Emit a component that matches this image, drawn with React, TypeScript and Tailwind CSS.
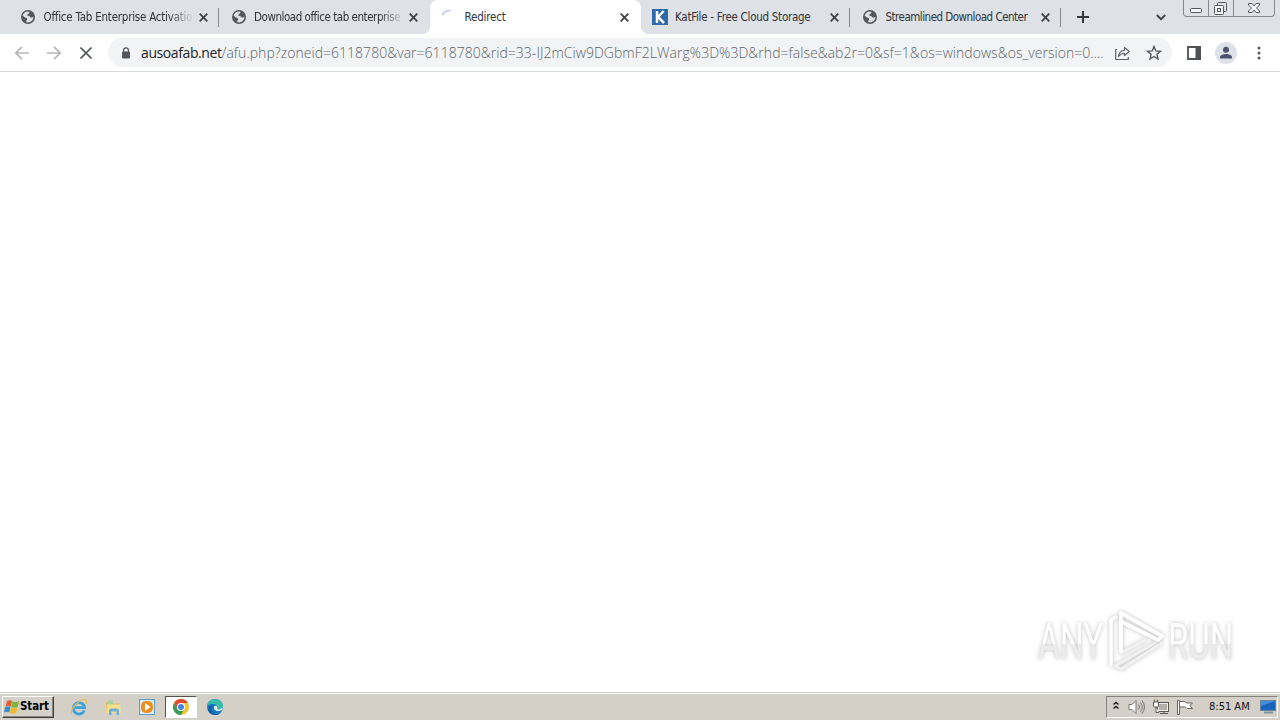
import type { ReactNode } from 'react';
import clsx from 'clsx';

type TabIcon = 'globe' | 'loading' | 'katfile';

interface BrowserTab {
  title: string;
  icon: TabIcon;
  active?: boolean;
  faded?: boolean;
  separator?: boolean;
  spacing: string;
}

const TABS: BrowserTab[] = [
  { title: 'Office Tab Enterprise Activatio', icon: 'globe', faded: true, separator: true, spacing: 'tracking-[-0.23px]' },
  { title: 'Download office tab enterprise', icon: 'globe', faded: true, spacing: 'tracking-[-0.46px]' },
  { title: 'Redirect', icon: 'loading', active: true, spacing: 'tracking-[-0.2px]' },
  { title: 'KatFile - Free Cloud Storage', icon: 'katfile', separator: true, spacing: 'tracking-[-0.27px]' },
  { title: 'Streamlined Download Center', icon: 'globe', separator: true, spacing: 'tracking-[-0.51px]' },
];

function GlobeIcon() {
  return (
    <svg width="14" height="14" viewBox="0 0 14 14">
      <circle cx="7" cy="7" r="7" fill="#54575c" />
      <path
        d="M1.600 5.500C2.500 3 4.500 1.700 7 1.600L8.500 2 8 3.500 6.500 4.300 6.300 5.500 8.500 6.200 9.500 7.600H11L12.400 6.800C12.500 9.500 10.500 12.300 7 12.400L5.500 12.200 5.200 10.500 6.300 9.500 5.600 8 3.500 7.200Z"
        fill="#dee1e6"
      />
    </svg>
  );
}

function TabFavicon({ icon }: { icon: TabIcon }) {
  if (icon === 'loading') {
    return (
      <svg width="16" height="16" viewBox="0 0 16 16" fill="none">
        <path d="M1.6 6.2C2.4 3.700 4.500 1.500 9.500 1.500" stroke="#b9c6ef" strokeWidth="1.500" />
      </svg>
    );
  }
  if (icon === 'katfile') {
    return (
      <svg width="16" height="16" viewBox="0 0 16 16">
        <rect width="16" height="16" fill="#2f69a8" />
        <path d="M5 2v12M11.700 2 6 8l6 6" stroke="#fff" strokeWidth="2.500" fill="none" />
      </svg>
    );
  }
  return <GlobeIcon />;
}

function CloseIcon() {
  return (
    <svg width="9" height="9" viewBox="0 0 9 9" stroke="#3f4247" strokeWidth="1.800">
      <path d="m.700.700 7.600 7.600M8.300.700.700 8.300" />
    </svg>
  );
}

function Tab({ tab }: { tab: BrowserTab }) {
  return (
    <div className={clsx('relative h-[34px] w-[210.5px] shrink-0', tab.active && 'rounded-t-lg bg-white')}>
      {tab.active && (
        <>
          <span className="absolute bottom-0 -left-2 size-2 bg-[radial-gradient(circle_at_0_0,transparent_8px,white_8px)]" />
          <span className="absolute -right-2 bottom-0 size-2 bg-[radial-gradient(circle_at_100%_0,transparent_8px,white_8px)]" />
        </>
      )}
      <div className="flex h-full items-center pl-[11px]">
        <span className="flex w-4 shrink-0 justify-center"><TabFavicon icon={tab.icon} /></span>
        <span
          className={clsx(
            'ml-[7.5px] w-[150px] overflow-hidden text-[11.5px] leading-4 whitespace-nowrap text-[#303338]',
            tab.faded && '[mask-image:linear-gradient(to_right,black_125px,transparent_150px)]',
            tab.spacing,
          )}
        >
          {tab.title}
        </span>
        <span className="ml-[5.4px]"><CloseIcon /></span>
      </div>
      {tab.separator && <span className="absolute top-2 right-[0.6px] h-[19px] w-px bg-[#86898f]" />}
    </div>
  );
}

function WindowControls() {
  return (
    <div className="absolute top-0 right-[5px] flex h-[17px] w-[92px] rounded-b-[4px] border border-t-0 border-[#85888e]">
      <svg width="90" height="16" viewBox="0 0 90 16" fill="none" stroke="#54585f">
        <path d="M24.5 0v16M49.5 0v16" stroke="#85888e" />
        <rect x="6.5" y="8.5" width="11" height="4" rx="1" fill="#f6f6f6" />
        <path d="M33.5 5V3.500q0-1 1-1h7q1 0 1 1v7q0 1-1 1H40" />
        <rect x="30.5" y="5.5" width="9" height="9" rx="1" fill="#f6f6f6" />
        <rect x="33.5" y="8.5" width="3" height="3" />
        <path d="M64.5 3.500h3.500l2 2.400 2-2.400h3.500v1.500l-3 3 3 3v1.500H72l-2-2.400-2 2.400h-3.500V11l3-3-3-3Z" fill="#f6f6f6" />
      </svg>
    </div>
  );
}

function TabStrip() {
  return (
    <header className="relative flex h-[34px] bg-[#dee1e6] pl-[9px]">
      {TABS.map((tab) => <Tab key={tab.title} tab={tab} />)}
      <div className="flex flex-1 items-center pl-[15.5px]">
        <svg width="12" height="12" viewBox="0 0 12 12" stroke="#34373c" strokeWidth="2">
          <path d="M6 0v12M0 6h12" />
        </svg>
        <svg className="ml-[67px]" width="10" height="7" viewBox="0 0 10 7" fill="none" stroke="#3e4146" strokeWidth="1.9">
          <path d="m.8 1 4.200 4.200L9.200 1" />
        </svg>
      </div>
      <WindowControls />
    </header>
  );
}

function Arrow({ back }: { back?: boolean }) {
  return (
    <svg className={clsx(back && 'rotate-180')} width="14" height="14" viewBox="0 0 14 14" fill="none" stroke="#b4b6b9" strokeWidth="1.7">
      <path d="M0 7h13M7 .8 13.200 7 7 13.200" />
    </svg>
  );
}

function Toolbar() {
  return (
    <div className="flex h-[38px] items-center border-b border-[#d9dadc] bg-white pl-[15px]">
      <Arrow back />
      <span className="ml-[18px]"><Arrow /></span>
      <svg className="ml-[19px]" width="12" height="12" viewBox="0 0 12 12" stroke="#54575b" strokeWidth="1.6">
        <path d="m.5.5 11 11M11.500.5.5 11.500" />
      </svg>

      <div className="ml-4 flex h-[29px] w-[1064px] items-center rounded-full bg-[#f1f3f5] pl-[13px]">
        <svg width="10" height="12" viewBox="0 0 10 12">
          <path d="M2.600 5V3.200a2.400 2.400 0 0 1 4.800 0V5" fill="none" stroke="#54575c" strokeWidth="1.300" />
          <rect x="1" y="4.500" width="8" height="7" rx="1" fill="#54575c" />
        </svg>
        <span className="ml-[10px] w-[973px] font-['Open_Sans','Noto_Sans',sans-serif] text-[14px] leading-5 font-light tracking-[0.03px] whitespace-nowrap text-[#60646a]">
          <span className="font-normal tracking-[-0.4px] text-[#202327]">ausoafab.net</span>
          /afu.php?zoneid=6118780&amp;var=6118780&amp;rid=33-IJ2mCiw9DGbmF2LWarg%3D%3D&amp;rhd=false&amp;ab2r=0&amp;sf=1&amp;os=windows&amp;os_version=0....
        </span>
        <svg className="shrink-0" width="17" height="16" viewBox="0 0 17 16" fill="none" stroke="#5c6066" strokeWidth="1.150">
          <path d="M3 4.500H1.700v10h12.600V12M4.500 11.500C4.800 7.800 6.700 5.500 10.500 5.200V2.500L15.300 6.500l-4.800 4V8.200C7.800 8.200 6 9.500 4.500 11.500Z" strokeLinejoin="round" />
        </svg>
        <svg className="ml-[15px] shrink-0" width="16" height="16" viewBox="0 0 16 16" fill="none" stroke="#55595f" strokeWidth="1.400">
          <path d="m8 1.500 1.800 4.400 4.700.4-3.600 3 1.100 4.700L8 11.500l-4 2.500 1.100-4.700-3.600-3 4.700-.4Z" />
        </svg>
      </div>

      <svg className="ml-[15px]" width="14" height="14" viewBox="0 0 14 14">
        <path d="M1 1h12v12H1Z" fill="none" stroke="#4f5257" strokeWidth="1.800" />
        <path d="M8.500 0H14v14H8.500Z" fill="#4f5257" />
      </svg>
      <svg className="ml-[14px]" width="22" height="22" viewBox="0 0 22 22">
        <circle cx="11" cy="11" r="11" fill="#dee1e8" />
        <circle cx="11" cy="7.800" r="3" fill="#4d536e" />
        <path d="M5 16.500v-1.300C5 13 8.500 12 11 12s6 1 6 3.200v1.300Z" fill="#4d536e" />
      </svg>
      <svg className="ml-[19.5px]" width="4" height="14" viewBox="0 0 4 14" fill="#54575c">
        <circle cx="2" cy="2" r="1.500" />
        <circle cx="2" cy="7" r="1.500" />
        <circle cx="2" cy="12" r="1.500" />
      </svg>
    </div>
  );
}

function Watermark() {
  return (
    <div className="absolute right-[48px] bottom-[20px] drop-shadow-[0_0_2px_rgba(0,0,0,0.26)]">
      <div className="flex h-16 items-center font-['Roboto','Liberation_Sans',sans-serif] text-[50px] leading-[60px] font-normal text-transparent">
        <span className="flex w-[63px] shrink-0 pt-[3px]">
          <span className="origin-left scale-x-[0.67] bg-linear-to-b from-white from-53% to-[#ececec] to-53% bg-clip-text">ANY</span>
        </span>
        <svg className="ml-[7px] shrink-0" width="56" height="62" viewBox="0 0 56 62" fill="none" stroke="#fff" strokeLinejoin="round" strokeLinecap="round">
          <path d="M54 34 13 60 7 57 47 34" stroke="#f1f1f1" strokeWidth="3" />
          <path d="M13 44 37 31" stroke="#f1f1f1" strokeWidth="3" />
          <path d="M3 56V11l5-3" strokeWidth="3.500" />
          <path d="M13 42V4L54 27 50 31 14 13" strokeWidth="3.800" />
        </svg>
        <span className="ml-[4px] flex w-[64px] shrink-0 pt-[3px]">
          <span className="origin-left scale-x-[0.66] bg-linear-to-b from-white from-53% to-[#ececec] to-53% bg-clip-text">RUN</span>
        </span>
      </div>
    </div>
  );
}

function WindowsFlag() {
  return (
    <svg className="shrink-0" width="16" height="16" viewBox="0 0 16 16">
      <path d="M3 2Q5.500.5 8 2L6.700 7.500Q4 6 1.500 7.500Z" fill="#e65b32" />
      <path d="M8.500 2.300q3 1.500 6.500 0L13.700 8Q11 9.500 7.200 8Z" fill="#7db63b" />
      <path d="M1.300 8q2.500-1.500 5.200 0l-1.300 5.500q-2.500-1.500-5.200 0Z" fill="#368dcc" />
      <path d="M7 8.500q3.200 1.500 6.500 0l-1.300 5.500q-3 1.500-6.500 0Z" fill="#f0b82f" />
    </svg>
  );
}

function InternetExplorerIcon() {
  return (
    <svg width="18" height="18" viewBox="0 0 18 18" fill="none">
      <path d="M14.300 12.500A5.700 5.700 0 1 1 14.700 9.700H5" stroke="#3aa2df" strokeWidth="2.700" />
      <path d="M1.800 15.800C-1 13 8 2 14.500 1.300c3-.3 2.300 3 1.200 5" stroke="#e3bd55" strokeWidth="1.200" />
    </svg>
  );
}

function ExplorerIcon() {
  return (
    <svg width="17" height="17" viewBox="0 0 17 17">
      <path d="M1 3h5l1 1.500h8V14H1Z" fill="#e4be59" />
      <path d="M3 1.500h5V6H3Z" fill="#a8d59d" />
      <path d="M2 5.500h13l1 8.500H1Z" fill="#f5df8c" />
      <path d="M4 16v-4.500q0-2 2-2h6q2 0 2 2V16h-2.500v-3.500h-5V16Z" fill="#6faed9" />
    </svg>
  );
}

function MediaPlayerIcon() {
  return (
    <svg width="16" height="16" viewBox="0 0 16 16">
      <rect x=".5" y=".5" width="15" height="15" fill="#d9edfa" stroke="#5a9ed0" />
      <rect x="2" y="2" width="12" height="12" rx="5" fill="#f08c1c" />
      <path d="m6 4 5.500 4L6 12Z" fill="#fff" />
    </svg>
  );
}

function ChromeIcon() {
  return (
    <svg width="16" height="16" viewBox="0 0 16 16">
      <circle cx="8" cy="8" r="8" fill="#f5c52e" />
      <path d="M1.070 4A8 8 0 0 1 14.930 4H8a4 4 0 0 0-3.460 6Z" fill="#df4936" />
      <path d="M1.070 4A8 8 0 0 0 8 16l3.460-6a4 4 0 0 1-6.920 0Z" fill="#3b9d55" />
      <circle cx="8" cy="8" r="4" fill="#fff" />
      <circle cx="8" cy="8" r="3" fill="#4285e6" />
    </svg>
  );
}

function EdgeIcon() {
  return (
    <svg width="16" height="16" viewBox="0 0 16 16">
      <circle cx="8" cy="8" r="8" fill="#167cc4" />
      <path d="M.2 7C.8 2.800 4 0 8 0c5 0 8 3.500 8 6.700 0 3-3.500 4.500-6 3.300 1.500-3-1-5-4-5C3.500 5 1.500 5.500.2 7Z" fill="#37bda9" />
      <path d="M6 7c-2 2-1 6 2 7.500 2 1 5 .3 6.500-1.500C11.500 17 5 17 2 13-.5 8.500 3 5.500 6 7Z" fill="#1460a9" />
      <path d="M7.500 7C5.800 9.500 8 12 11 12c1.500 0 3-.5 4-1L16 7c-.5 3-4 4-6 3 .6-1.300.3-2.500-.7-3.200Z" fill="#e7f0ef" />
    </svg>
  );
}

function LaunchItem({ active, children }: { active?: boolean; children: ReactNode }) {
  return (
    <div
      className={clsx(
        'mr-[2px] flex h-[22px] w-[32px] items-center justify-center',
        active && 'border border-t-[#55534f] border-r-white border-b-white border-l-[#55534f] bg-white',
      )}
    >
      {children}
    </div>
  );
}

function SystemTray() {
  return (
    <div className="mt-[3px] mr-[2px] ml-auto flex h-[22px] w-[172px] items-center border border-t-[#85827b] border-r-white border-b-white border-l-[#85827b] pl-[6px]">
      <svg className="mb-[3px]" width="6" height="9" viewBox="0 0 6 9" fill="none" stroke="#111" strokeWidth="1.400">
        <path d="m.5 3.500 2.500-2 2.500 2M.5 7.500 3 5.500l2.500 2" />
      </svg>
      <svg className="ml-[9px]" width="17" height="16" viewBox="0 0 17 16" fill="none" stroke="#77756f">
        <path d="M1 5.500h3l4-4v13l-4-4H1Z" fill="#fff" />
        <path d="M10.500 5.500q2 2.500 0 5M12.500 3.500q3.500 4.500 0 9M14 1.500q5 6.500 0 13" />
      </svg>
      <svg className="ml-[8px]" width="17" height="16" viewBox="0 0 17 16" fill="none" stroke="#5c5a55">
        <rect x="4.500" y="3.500" width="11" height="9" fill="#eee" />
        <path d="M6 5h8v6H6Z" fill="#b2b0aa" stroke="none" />
        <path d="M7 14.500h8M11 12.500v2" />
        <path d="M.5 3v4q0 1 1 1h3q1 0 1-1V3ZM1.500 3V.5M4.500 3V.5M3 8v5.500h3" fill="#fff" />
      </svg>
      <svg className="ml-[7px]" width="16" height="16" viewBox="0 0 16 16" stroke="#66645f">
        <path d="M.5 1.500h2v14h-2Z" fill="#fff" />
        <path d="M2.500 2.500h5q1.500 1 2.500 1.500h5.500L13 6.500l2.500 3H10q-1-1.500-2.500-1.500h-5Z" fill="#fff" />
      </svg>
      <span className="ml-4 w-[41px] text-[11px] whitespace-nowrap text-[#111]">8:51 AM</span>
      <svg className="ml-[10px]" width="17" height="14" viewBox="0 0 17 14">
        <rect x=".5" y=".5" width="15" height="10" fill="#1765bd" stroke="#69839f" />
        <path d="M1 1h14L1 6Z" fill="#448fd9" />
        <path d="M4 12.500h9" stroke="#7f929f" strokeWidth="2" />
      </svg>
    </div>
  );
}

function Taskbar() {
  return (
    <footer className="flex h-7 bg-[#d4d0c8]">
      <div className="flex flex-1 border-t border-[#d4d0c8] shadow-[inset_0_1px_0_white]">
        <button className="mt-[3px] ml-[2px] flex h-[22px] w-[52px] items-center border border-t-white border-r-[#403e3b] border-b-[#403e3b] border-l-white pl-px font-bold text-black shadow-[inset_-1px_-1px_0_#88857e]">
          <WindowsFlag />
          <span className="font-['DejaVu_Sans_Condensed','DejaVu_Sans',sans-serif] text-[11.5px] tracking-[-0.1px]">Start</span>
        </button>
        <div className="mt-[3px] ml-[9px] flex">
          <LaunchItem><InternetExplorerIcon /></LaunchItem>
          <LaunchItem><ExplorerIcon /></LaunchItem>
          <LaunchItem><MediaPlayerIcon /></LaunchItem>
          <LaunchItem active><ChromeIcon /></LaunchItem>
          <LaunchItem><EdgeIcon /></LaunchItem>
        </div>
        <SystemTray />
      </div>
    </footer>
  );
}

export default function App() {
  return (
    <div className="flex h-[720px] w-[1280px] flex-col overflow-hidden bg-white font-['DejaVu_Sans_Condensed','Noto_Sans',sans-serif]">
      <TabStrip />
      <Toolbar />
      <main className="relative flex-1 bg-white">
        <Watermark />
      </main>
      <Taskbar />
    </div>
  );
}
